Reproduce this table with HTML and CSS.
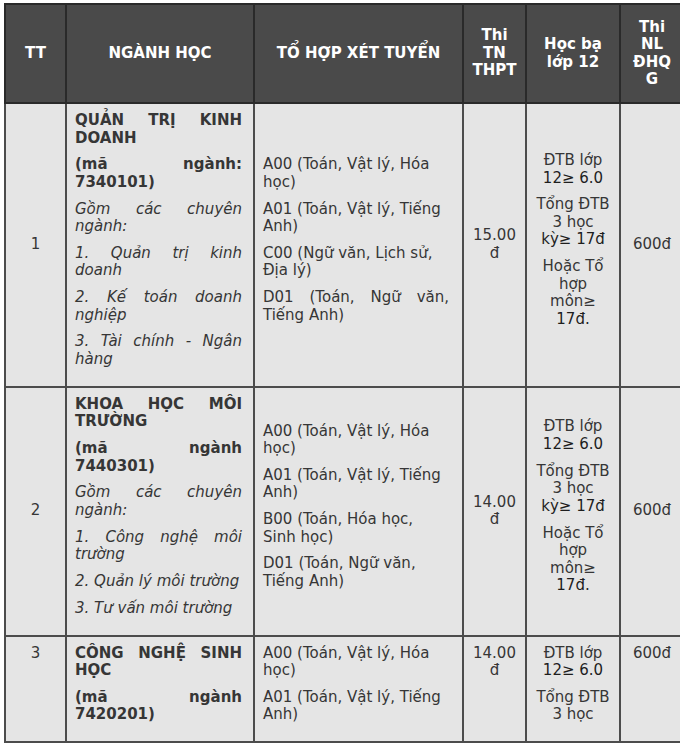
FILE: index.html
```html
<!DOCTYPE html>
<html lang="vi">
<head>
<meta charset="utf-8">
<title>Bảng tuyển sinh</title>
<link rel="stylesheet" href="styles.css">
</head>
<body>
<div class="wrap">
<table class="tbl">
  <colgroup>
    <col class="c1"><col class="c2"><col class="c3"><col class="c4"><col class="c5"><col class="c6">
  </colgroup>
  <thead>
    <tr>
      <th>TT</th>
      <th>NGÀNH HỌC</th>
      <th>TỔ HỢP XÉT TUYỂN</th>
      <th>Thi TN THPT</th>
      <th>Học bạ lớp 12</th>
      <th class="brk">Thi NL ĐHQG</th>
    </tr>
  </thead>
  <tbody>
    <tr>
      <td class="center">1</td>
      <td class="major">
        <p class="b">QUẢN TRỊ KINH DOANH</p>
        <p class="b">(mã ngành: 7340101)</p>
        <p class="i">Gồm các chuyên ngành:</p>
        <p class="i">1. Quản trị kinh doanh</p>
        <p class="i">2. Kế toán doanh nghiệp</p>
        <p class="i">3. Tài chính - Ngân hàng</p>
      </td>
      <td class="combo">
        <p>A00 (Toán, Vật lý, Hóa học)</p>
        <p>A01 (Toán, Vật lý, Tiếng Anh)</p>
        <p>C00 (Ngữ văn, Lịch sử, Địa lý)</p>
        <p class="just">D01 (Toán, Ngữ văn, Tiếng Anh)</p>
      </td>
      <td class="center">15.00 đ</td>
      <td class="center">
        <p>ĐTB lớp <span class="dk">12≥ 6.0</span></p>
        <p>Tổng ĐTB 3 học <span class="dk">kỳ≥ 17đ</span></p>
        <p>Hoặc Tổ hợp môn≥ <span class="dk">17đ.</span></p>
      </td>
      <td class="center">600đ</td>
    </tr>
    <tr>
      <td class="center">2</td>
      <td class="major">
        <p class="b">KHOA HỌC MÔI TRƯỜNG</p>
        <p class="b">(mã ngành 7440301)</p>
        <p class="i">Gồm các chuyên ngành:</p>
        <p class="i">1. Công nghệ môi trường</p>
        <p class="i">2. Quản lý môi trường</p>
        <p class="i">3. Tư vấn môi trường</p>
      </td>
      <td class="combo">
        <p>A00 (Toán, Vật lý, Hóa học)</p>
        <p>A01 (Toán, Vật lý, Tiếng Anh)</p>
        <p>B00 (Toán, Hóa học, Sinh học)</p>
        <p>D01 (Toán, Ngữ văn, Tiếng Anh)</p>
      </td>
      <td class="center">14.00 đ</td>
      <td class="center">
        <p>ĐTB lớp <span class="dk">12≥ 6.0</span></p>
        <p>Tổng ĐTB 3 học <span class="dk">kỳ≥ 17đ</span></p>
        <p>Hoặc Tổ hợp môn≥ <span class="dk">17đ.</span></p>
      </td>
      <td class="center">600đ</td>
    </tr>
    <tr class="top">
      <td class="center">3</td>
      <td class="major">
        <p class="b">CÔNG NGHỆ SINH HỌC</p>
        <p class="b">(mã ngành 7420201)</p>
      </td>
      <td class="combo">
        <p>A00 (Toán, Vật lý, Hóa học)</p>
        <p>A01 (Toán, Vật lý, Tiếng Anh)</p>
      </td>
      <td class="center">14.00 đ</td>
      <td class="center">
        <p>ĐTB lớp <span class="dk">12≥ 6.0</span></p>
        <p>Tổng ĐTB 3 học</p>
      </td>
      <td class="center">600đ</td>
    </tr>
  </tbody>
</table>
</div>
</body>
</html>
```

FILE: styles.css
```css
html, body {
  margin: 0;
  padding: 0;
  background: #ffffff;
}
body {
  overflow: hidden;
  width: 680px;
  height: 748px;
}
.wrap {
  padding: 3px 0 0 4px;
  width: 700px;
}
.tbl {
  border-collapse: collapse;
  table-layout: fixed;
  width: 679px;
  font-family: "DejaVu Sans", "Noto Sans", sans-serif;
  font-size: 15px;
  line-height: 17.5px;
  color: #363636;
}
.c1 { width: 61px; }
.c2 { width: 188px; }
.c3 { width: 209px; }
.c4 { width: 63px; }
.c5 { width: 94px; }
.c6 { width: 64px; }

.tbl th {
  background: #4a4a4a;
  color: #ffffff;
  font-weight: bold;
  text-align: center;
  vertical-align: middle;
  border: 2px solid #2a2a2a;
  padding: 13.5px 8px 13.5px;
}
.tbl th.brk {
  overflow-wrap: anywhere;
}
.tbl td {
  background: #e5e5e5;
  border: 2px solid #4c4c4c;
  padding: 8px;
  vertical-align: middle;
}
.tbl p {
  margin: 0 0 9.3px 0;
}
.center {
  text-align: center;
}
.major {
  text-align: justify;
}
.tbl td.major {
  padding-right: 11px;
}
.combo {
  text-align: left;
}
.tbl td.combo {
  padding-right: 13px;
}
.combo .just {
  text-align: justify;
}
.b {
  font-weight: bold;
}
.i {
  font-style: italic;
}
.dk {
  color: #1e1e1e;
}
.top td {
  vertical-align: top;
}
```
